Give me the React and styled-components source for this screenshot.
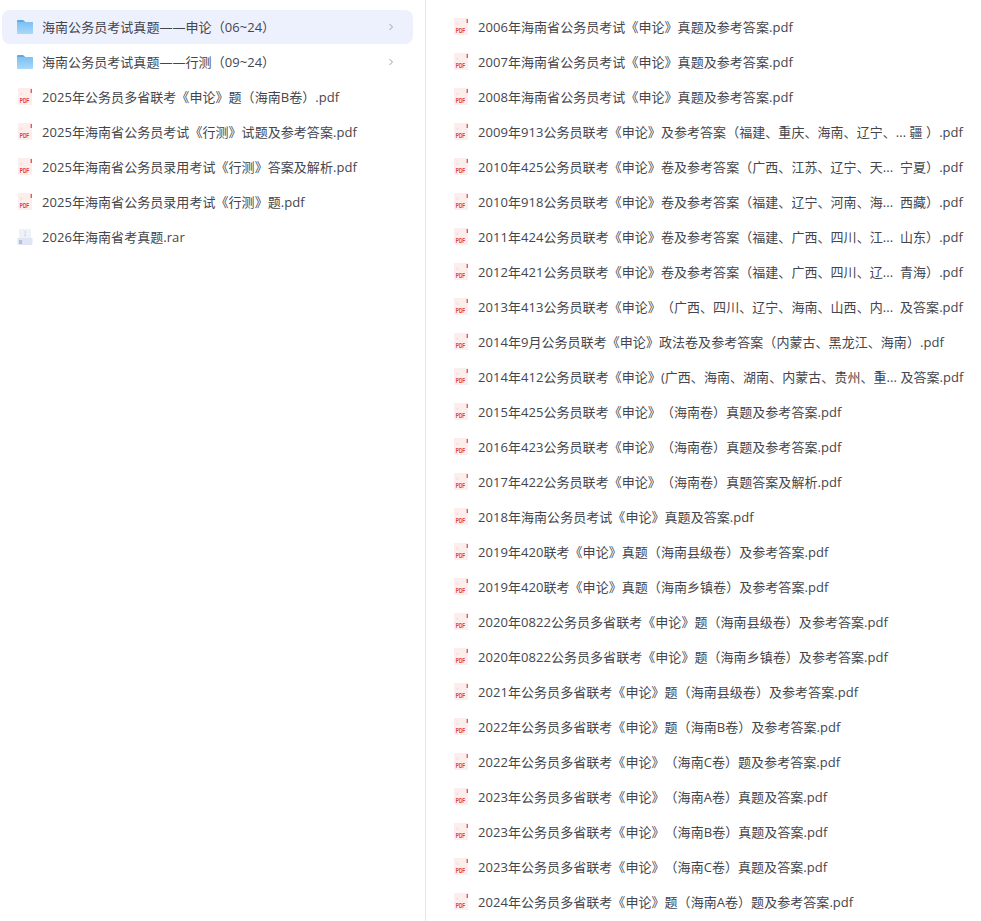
import React from "react";
import styled, { createGlobalStyle } from "styled-components";

const leftFiles = [
  { name: "海南公务员考试真题——申论（06~24）", type: "folder", active: true },
  { name: "海南公务员考试真题——行测（09~24）", type: "folder" },
  { name: "2025年公务员多省联考《申论》题（海南B卷）.pdf", type: "pdf" },
  { name: "2025年海南省公务员考试《行测》试题及参考答案.pdf", type: "pdf" },
  { name: "2025年海南省公务员录用考试《行测》答案及解析.pdf", type: "pdf" },
  { name: "2025年海南省公务员录用考试《行测》题.pdf", type: "pdf" },
  { name: "2026年海南省考真题.rar", type: "rar" },
];

const rightFiles = [
  "2006年海南省公务员考试《申论》真题及参考答案.pdf",
  "2007年海南省公务员考试《申论》真题及参考答案.pdf",
  "2008年海南省公务员考试《申论》真题及参考答案.pdf",
  "2009年913公务员联考《申论》及参考答案（福建、重庆、海南、辽宁、... 疆 ）.pdf",
  "2010年425公务员联考《申论》卷及参考答案（广西、江苏、辽宁、天...\u00A0 宁夏）.pdf",
  "2010年918公务员联考《申论》卷及参考答案（福建、辽宁、河南、海...\u00A0 西藏）.pdf",
  "2011年424公务员联考《申论》卷及参考答案（福建、广西、四川、江...\u00A0 山东）.pdf",
  "2012年421公务员联考《申论》卷及参考答案（福建、广西、四川、辽...\u00A0 青海）.pdf",
  "2013年413公务员联考《申论》（广西、四川、辽宁、海南、山西、内...\u00A0 及答案.pdf",
  "2014年9月公务员联考《申论》政法卷及参考答案（内蒙古、黑龙江、海南）.pdf",
  "2014年412公务员联考《申论》(广西、海南、湖南、内蒙古、贵州、重... 及答案.pdf",
  "2015年425公务员联考《申论》（海南卷）真题及参考答案.pdf",
  "2016年423公务员联考《申论》（海南卷）真题及参考答案.pdf",
  "2017年422公务员联考《申论》（海南卷）真题答案及解析.pdf",
  "2018年海南公务员考试《申论》真题及答案.pdf",
  "2019年420联考《申论》真题（海南县级卷）及参考答案.pdf",
  "2019年420联考《申论》真题（海南乡镇卷）及参考答案.pdf",
  "2020年0822公务员多省联考《申论》题（海南县级卷）及参考答案.pdf",
  "2020年0822公务员多省联考《申论》题（海南乡镇卷）及参考答案.pdf",
  "2021年公务员多省联考《申论》题（海南县级卷）及参考答案.pdf",
  "2022年公务员多省联考《申论》题（海南B卷）及参考答案.pdf",
  "2022年公务员多省联考《申论》（海南C卷）题及参考答案.pdf",
  "2023年公务员多省联考《申论》（海南A卷）真题及答案.pdf",
  "2023年公务员多省联考《申论》（海南B卷）真题及答案.pdf",
  "2023年公务员多省联考《申论》（海南C卷）真题及答案.pdf",
  "2024年公务员多省联考《申论》题（海南A卷）题及参考答案.pdf",
];

const FolderIcon = () => (
  <svg width="18" height="18" viewBox="0 0 18 18">
    <defs>
      <linearGradient id="folderFill" x1="0" y1="0" x2="0" y2="1">
        <stop offset="0" stopColor="#7cc0f2" />
        <stop offset="1" stopColor="#a9d8fa" />
      </linearGradient>
    </defs>
    <path d="M1 3.2C1 2.5 1.5 2 2.2 2h4.6c.4 0 .7.2 1 .5L9.2 4H1z" fill="#5aa9e8" />
    <path d="M1 4h15c.6 0 1 .4 1 1v10.2c0 .5-.4.8-.8.8H1.8c-.5 0-.8-.4-.8-.8z" fill="url(#folderFill)" />
  </svg>
);

const PdfIcon = () => (
  <svg width="18" height="18" viewBox="0 0 18 18">
    <path d="M2 0h14v17H3c-.6 0-1-.4-1-1z" fill="#fdeeee" />
    <path d="M4.5 4l2.5 2-2.5 1.5z" fill="#f7dcdc" />
    <rect x="14.6" y="1" width="1.3" height="4" fill="#e8474a" />
    <text x="8.5" y="14.6" textAnchor="middle" fontSize="6.5" fontWeight="700" textLength="9.5" lengthAdjust="spacingAndGlyphs" fontFamily="Liberation Sans, sans-serif" fill="#e23b3f">PDF</text>
  </svg>
);

const RarIcon = () => (
  <svg width="18" height="18" viewBox="0 0 18 18">
    <path d="M4 1h10c.6 0 1 .4 1 1v8H3V2c0-.6.4-1 1-1z" fill="#eef1f8" />
    <path d="M1.5 10H16.5v5.8c0 .7-.5 1.2-1.2 1.2H2.7c-.7 0-1.2-.5-1.2-1.2z" fill="#dfe5f3" />
    <path d="M8.5 3l1.2 1.2-1.2 1.2M8.5 6l1.2 1.2-1.2 1.2" fill="none" stroke="#b8c0d4" strokeWidth=".8" />
    <rect x="3" y="12.5" width="3" height="1" fill="#8e99b3" />
    <rect x="3" y="14.5" width="3" height="1" fill="#8e99b3" />
  </svg>
);

const icons = { folder: FolderIcon, pdf: PdfIcon, rar: RarIcon };

const Row = ({ name, type = "pdf", active }) => {
  const Icon = icons[type];
  return (
    <Item $active={active}>
      <IconBox><Icon /></IconBox>
      <Name>{name}</Name>
      {type === "folder" && (
        <Chevron width="6" height="8" viewBox="0 0 6 8">
          <path d="M1.5 1l3 3-3 3" fill="none" stroke="#9a9ea8" strokeWidth="1" />
        </Chevron>
      )}
    </Item>
  );
};

const App = () => (
  <>
    <GlobalStyle />
    <Page>
      <LeftPane>
        {leftFiles.map(file => <Row key={file.name} {...file} />)}
      </LeftPane>
      <RightPane>
        {rightFiles.map(name => <Row key={name} name={name} />)}
      </RightPane>
    </Page>
  </>
);

const GlobalStyle = createGlobalStyle`
  html, body {
    margin: 0;
    padding: 0;
    background: #fff;
    overflow: hidden;
  }
`;

const Page = styled.div`
  display: flex;
  align-items: stretch;
  width: 981px;
  height: 921px;
  overflow: hidden;
  font-family: "Open Sans", "Noto Sans CJK SC", sans-serif;
`;

const LeftPane = styled.div`
  display: flex;
  flex-direction: column;
  gap: 1px;
  width: 426px;
  box-sizing: border-box;
  padding: 10px 12px 0 2px;
  border-right: 1px solid #e8e8ea;
`;

const RightPane = styled.div`
  display: flex;
  flex-direction: column;
  gap: 1px;
  flex: 1;
  min-width: 0;
  padding: 10px 0 0 12px;
`;

const Item = styled.div`
  display: flex;
  flex: none;
  align-items: center;
  height: 34px;
  padding: 0 19px 0 14px;
  border-radius: 8px;
  background: ${props => props.$active ? "#edf1fe" : "transparent"};
`;

const IconBox = styled.span`
  display: flex;
  flex: none;
  width: 18px;
  height: 18px;
  margin-right: 8px;
`;

const Name = styled.span`
  flex: 1;
  min-width: 0;
  font-size: 13px;
  line-height: 18px;
  color: #44464d;
  white-space: nowrap;
  letter-spacing: 0.05px;
  text-spacing-trim: space-all;
`;

const Chevron = styled.svg`
  flex: none;
`;

export default App;
